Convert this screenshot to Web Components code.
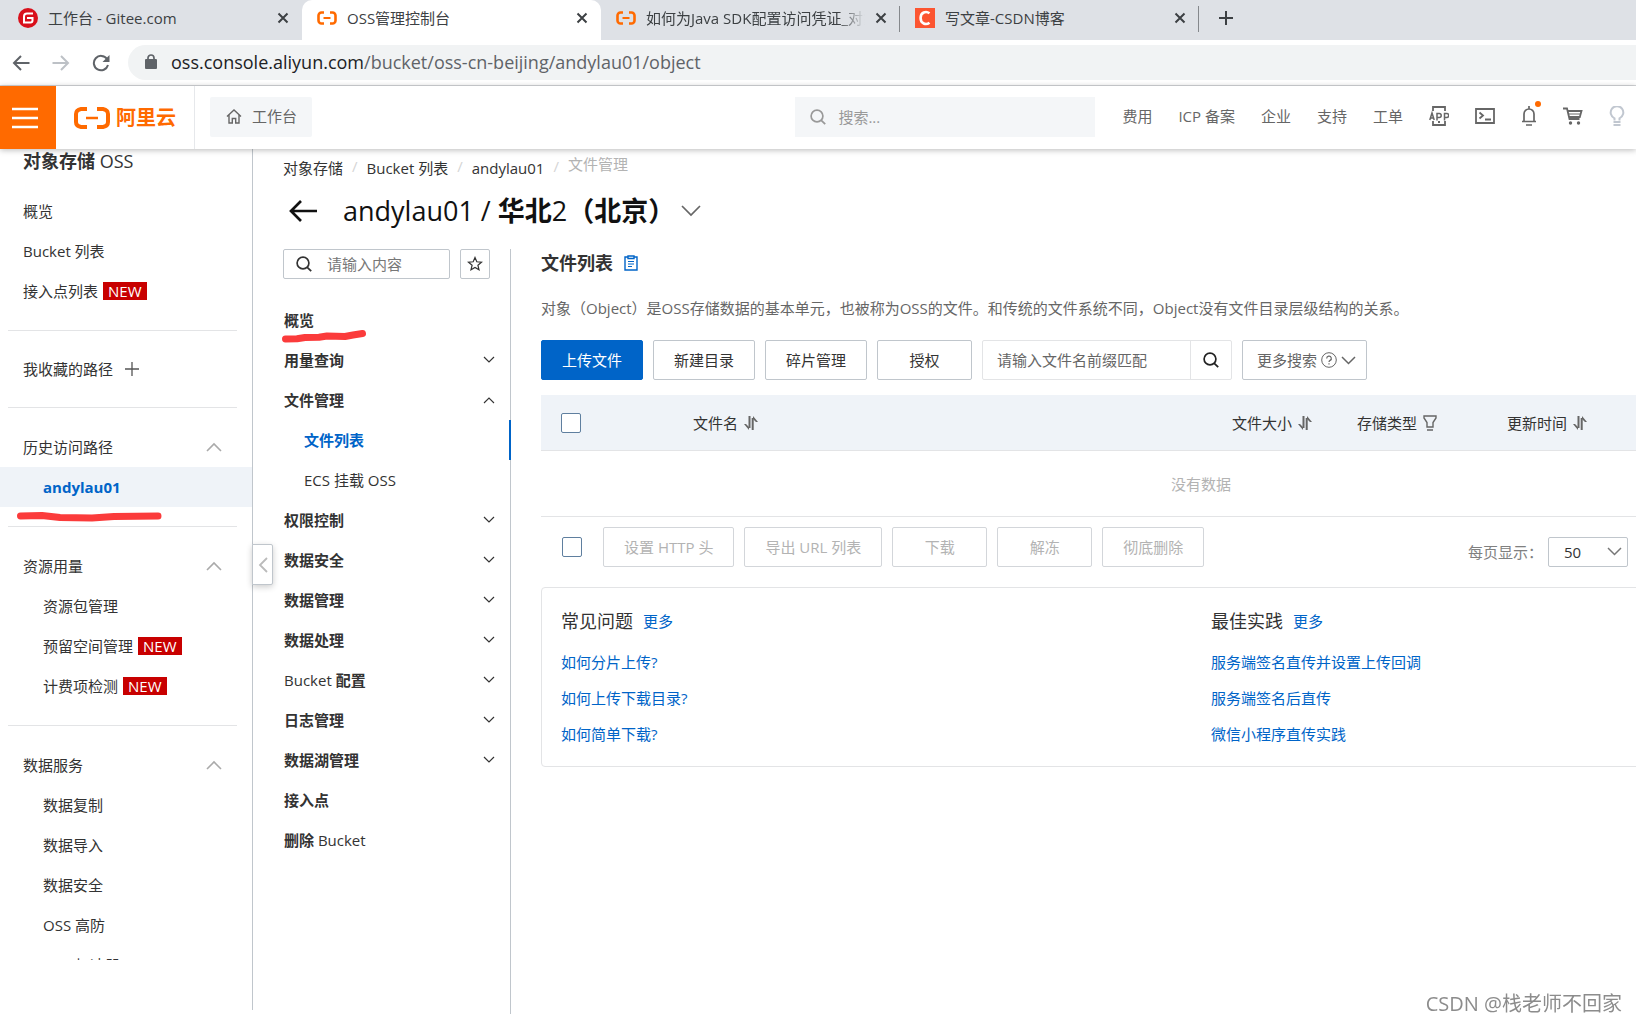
<!DOCTYPE html>
<html lang="zh-CN">
<head>
<meta charset="utf-8">
<title>OSS管理控制台</title>
<style>
html{height:100%}
body{margin:0;height:100%;overflow:hidden;background:#fff;color:#333;
font:15px/20px "Open Sans","Noto Sans CJK SC",sans-serif;
--blue:#0064c8;--orange:#ff6a00;--line:#e3e4e6;--edge:#c0c6cc;--muted:#666;--faint:#b3b3b3;--fill:#eff3f8}
</style>
</head>
<body>
<oss-window></oss-window>
<script>
function define(name, css, html, setup){
  const tpl=document.createElement('template');
  tpl.innerHTML='<style>:host,*{box-sizing:border-box}a{color:inherit;text-decoration:none}button,input,select{font:inherit;color:inherit;margin:0}'+css+'</style>'+html;
  customElements.define(name,class extends HTMLElement{
    connectedCallback(){
      if(this.shadowRoot)return;
      const root=this.attachShadow({mode:'open'});
      root.append(tpl.content.cloneNode(true));
      if(setup)setup(this,root);
    }
  });
}

const S='fill="none" stroke="currentColor" ';
const icons={
 close:[12,12,'<path '+S+'stroke-width="2" d="M1.5 1.5l9 9M10.5 1.5l-9 9"/>'],
 plus:[16,16,'<path '+S+'stroke-width="2" d="M8 1v14M1 8h14"/>'],
 add:[16,16,'<path '+S+'stroke-width="1.3" d="M8 1v14M1 8h14"/>'],
 gitee:[20,20,'<circle cx="10" cy="10" r="10" fill="#d9101b"/><path fill="none" stroke="#fff" stroke-width="2" d="M15 5.5H9a3 3 0 0 0-3 3V14.500h6.500a2 2 0 0 0 2-2V10H9"/>'],
 aliyun:[20,14,'<path fill="none" stroke="#ff6a00" stroke-width="2.600" d="M7 1.500H4.500A3 3 0 0 0 1.500 4.500v5a3 3 0 0 0 3 3H7M13 1.500h2.500a3 3 0 0 1 3 3v5a3 3 0 0 1-3 3H13"/><path stroke="#ff6a00" stroke-width="2" d="M6.500 7h7"/>'],
 brand:[36,22,'<path fill="none" stroke="#ff6a00" stroke-width="4" d="M13 2H7Q2 3 2 7v8q0 4 5 5h6M23 2h6q5 1 5 5v8q0 4-5 5h-6"/><path stroke="#ff6a00" stroke-width="2.500" d="M12 11h12"/>'],
 csdn:[20,20,'<path fill="#fc5531" d="M0 0h20v20H0z"/><path fill="none" stroke="#fff" stroke-width="2.600" d="M14.500 5.300C11 2.700 5.600 4.300 5.600 10s5.400 7.300 8.900 4.700"/>'],
 back:[18,16,'<path '+S+'stroke-width="2" d="M17.500 8H2M9 1L2 8l7 7"/>'],
 forward:[18,16,'<path '+S+'stroke-width="2" d="M.5 8H16M9 1l7 7-7 7"/>'],
 reload:[18,18,'<path '+S+'stroke-width="2" d="M15 5A7.200 7.200 0 1 0 16 11"/><path fill="currentColor" d="M17.500 1v7h-7z"/>'],
 lock:[12,15,'<rect y="5" width="12" height="10" rx="1" fill="currentColor"/><path '+S+'stroke-width="1.700" d="M3 6V4a3 3 0 0 1 6 0v2"/>'],
 menu:[26,22,'<path '+S+'stroke-width="2.400" d="M0 2h26M0 11h26M0 20h26"/>'],
 home:[16,15,'<path '+S+'stroke-width="1.400" d="M1 7.500L8 1l7 6.500M3 6v8h3.300V9.500h3.400V14H13V6"/>'],
 search:[16,16,'<circle cx="7" cy="7" r="5.900" '+S+'stroke-width="1.700"/><path '+S+'stroke-width="1.800" d="M11 11.200l4.200 4"/>'],
 app:[20,20,'<path '+S+'stroke-width="1.800" d="M4 5V1h12v4M4 15v4h12v-4M9 16h2"/><path '+S+'stroke-width="1.500" d="M.8 14L3 7l2.200 7M1.500 12h3M8 14.500V7.500h2.200a1.700 1.700 0 0 1 0 4H8M15.500 14.500V7.500h2.200a1.700 1.700 0 0 1 0 4h-2.200"/>'],
 terminal:[20,16,'<path '+S+'stroke-width="1.800" d="M1 1h18v14H1zM4.500 4.500L8 7.500l-3.500 3M10 11.500h6"/>'],
 bell:[16,20,'<path '+S+'stroke-width="1.700" d="M8 0v3M1 15.500h14M3 15V8a5 5 0 0 1 10 0v7M5 19h6"/>'],
 cart:[20,18,'<path '+S+'stroke-width="1.800" d="M0 1.500h4L6.500 12h10M4.500 4H18.500l-1.700 6H6"/><path '+S+'d="M6 7h11"/><circle cx="7.500" cy="16" r="1.700" fill="currentColor"/><circle cx="15.500" cy="16" r="1.700" fill="currentColor"/>'],
 bulb:[16,20,'<path '+S+'stroke-width="2" d="M5.500 14.500v-2.200a6.300 6.300 0 1 1 5 0v2.200M4.500 16h7M4.500 19h7"/>'],
 up:[16,10,'<path '+S+'stroke-width="1.600" d="M1 9l7-7 7 7"/>'],
 down:[12,8,'<path '+S+'stroke-width="1.200" d="M1 1l5 5 5-5"/>'],
 upSmall:[12,8,'<path '+S+'stroke-width="1.100" d="M1 7l5-5 5 5"/>'],
 downBig:[20,12,'<path '+S+'stroke-width="1.700" d="M1 1l9 9 9-9"/>'],
 downMid:[15,9,'<path '+S+'stroke-width="1.500" d="M1 1l6.500 6.500L14 1"/>'],
 left:[10,16,'<path '+S+'stroke-width="1.800" d="M9 1L2 8l7 7"/>'],
 arrow:[28,22,'<path '+S+'stroke-width="2.700" d="M28 11H2M12 1L2 11l10 10"/>'],
 star:[16,16,'<path '+S+'stroke-width="1.200" d="M8 1.500l1.800 4.300 4.700.4-3.600 3 1.100 4.600L8 11.400l-4 2.400 1.100-4.600-3.600-3 4.700-.4z"/>'],
 note:[14,16,'<path '+S+'stroke-width="1.400" d="M4 2H1v13h12V2h-3M4 1h6v2.500H4z"/><path '+S+'d="M4 6.500h6M4 9h6M4 11.500h4"/>'],
 help:[16,16,'<circle cx="8" cy="8" r="7.300" '+S+'/><path '+S+'stroke-width="1.200" d="M5.700 6.400a2.300 2.300 0 1 1 3.400 2C8.200 8.900 8 9.200 8 10M8 11.200v1.400"/>'],
 sort:[14,14,'<path '+S+'stroke-width="2" d="M5.500 0v12M8.700 14V2"/><path fill="currentColor" d="M0 8h2l3 3v3zM14 6h-2L9 3V0z"/>'],
 filter:[14,16,'<path '+S+'stroke-width="1.400" d="M1 1h12v2L10 7.500V12H4V7.500L1 3zM4 15h6"/>']
};
define('ui-icon',':host{display:inline-flex;flex:none}svg{display:block}','',(el,root)=>{
  const [w,h,p]=icons[el.getAttribute('name')];
  root.innerHTML+='<svg width="'+w+'" height="'+h+'" viewBox="0 0 '+w+' '+h+'" aria-hidden="true">'+p+'</svg>';
});

/* ---------- browser chrome ---------- */
define('browser-tab',`:host{display:flex;flex:0 1 299px;min-width:0;align-items:center;height:40px;padding:0 13px 4px 15px;color:#3c4043;position:relative}
:host([first]){flex-basis:302px;padding-left:18px}
:host([active]){background:#fff;border-radius:10px 10px 0 0}
:host([line])::after{content:"";position:absolute;right:0;top:6px;width:1px;height:26px;background:#85888c}
.t{flex:1;min-width:0;overflow:hidden;white-space:nowrap;margin:0 10px;line-height:24px}
:host([cut]) .t{-webkit-mask-image:linear-gradient(90deg,#000 88%,transparent)}
button{border:0;background:none;padding:0;display:flex}`,
`<slot name="icon"></slot><span class="t"><slot></slot></span><button aria-label="关闭标签页"><ui-icon name="close"></ui-icon></button>`);

define('browser-bar',`:host{display:block}
.tabs{display:flex;height:40px;background:#dee1e6}
.new{border:0;background:none;padding:0 19px 4px;display:flex;align-items:center;color:#3c4043}
.tools{display:flex;align-items:center;height:46px;border-bottom:1px solid #d5d7da;padding-left:12px;color:#5f6368}
.tools button{border:0;background:none;padding:0;display:flex;margin-right:22px}
.tools .f{color:#bdc1c6}
.tools .r{margin-right:18px}
.url{flex:1;height:35px;border-radius:18px 0 0 18px;background:#f1f3f4;display:flex;align-items:center;padding:0 0 2px 17px;gap:14px;font-size:18px;line-height:24px}
b{font-weight:400;color:#202124}`,
`<div class="tabs">
<browser-tab first><ui-icon slot="icon" name="gitee"></ui-icon>工作台 - Gitee.com</browser-tab>
<browser-tab active><ui-icon slot="icon" name="aliyun"></ui-icon>OSS管理控制台</browser-tab>
<browser-tab cut line><ui-icon slot="icon" name="aliyun"></ui-icon>如何为Java SDK配置访问凭证_对象存储</browser-tab>
<browser-tab line><ui-icon slot="icon" name="csdn"></ui-icon>写文章-CSDN博客</browser-tab>
<button class="new" aria-label="新标签页"><ui-icon name="plus"></ui-icon></button></div>
<div class="tools"><button aria-label="后退"><ui-icon name="back"></ui-icon></button><button class="f" aria-label="前进"><ui-icon name="forward"></ui-icon></button><button class="r" aria-label="刷新"><ui-icon name="reload"></ui-icon></button>
<div class="url"><ui-icon name="lock"></ui-icon><span><b>oss.console.aliyun.com</b>/bucket/oss-cn-beijing/andylau01/object</span></div></div>`);

/* ---------- console header ---------- */
define('console-header',`:host{display:flex;height:63px;align-items:flex-start;background:#fff;box-shadow:0 1px 6px rgba(0,0,0,.28);position:relative;z-index:2;color:#666}
.m{width:56px;height:63px;border:0;background:var(--orange);color:#fff;padding:0 0 0 12px;display:flex;align-items:center}
.brand{display:flex;align-items:center;gap:6px;height:63px;padding:0 18px;border-right:1px solid #e6e8eb;color:var(--orange);font-size:20px;font-weight:700;white-space:nowrap}
.work,.s,nav{height:40px;margin-top:11px;display:flex;align-items:center}
.work{gap:10px;margin-left:15px;padding:0 15px 2px 16px;background:#f4f6f8;border-radius:2px;white-space:nowrap}
.s{gap:12px;width:300px;margin-left:auto;padding:0 15px;background:#f4f6f8;color:#999}
.s input{border:0;background:none;outline:0;padding:0;flex:1;min-width:0}
.s input::placeholder{color:#999}
nav{gap:26px;margin-right:11px;margin-left:27px;padding-bottom:2px;white-space:nowrap}
nav a{display:flex;position:relative}
.dot::after{content:"";position:absolute;right:-4px;top:-5px;width:6px;height:6px;border-radius:50%;background:var(--orange)}
.off{color:#c1c7d0}`,
`<button class="m" aria-label="菜单"><ui-icon name="menu"></ui-icon></button>
<a class="brand" href="#"><ui-icon name="brand"></ui-icon>阿里云</a>
<a class="work" href="#"><ui-icon name="home"></ui-icon>工作台</a>
<label class="s"><ui-icon name="search"></ui-icon><input placeholder="搜索..." aria-label="搜索"></label>
<nav><a href="#">费用</a><a href="#">ICP 备案</a><a href="#">企业</a><a href="#">支持</a><a href="#">工单</a>
<a href="#" aria-label="APP"><ui-icon name="app"></ui-icon></a><a href="#" aria-label="终端"><ui-icon name="terminal"></ui-icon></a><a class="dot" href="#" aria-label="消息"><ui-icon name="bell"></ui-icon></a><a href="#" aria-label="购物车"><ui-icon name="cart"></ui-icon></a><a class="off" href="#" aria-label="提示"><ui-icon name="bulb"></ui-icon></a></nav>`);

/* ---------- product sidebar ---------- */
define('side-item',`:host{display:flex;align-items:center;height:40px;padding:0 30px 0 23px;white-space:nowrap}
:host([sub]){padding-left:43px}
:host([current]){background:var(--fill);color:var(--blue);font-weight:700}
:host([fav]){height:38px}
ui-icon{margin-left:auto;color:#aaa}
.n{margin-left:5px;padding:0 5px;height:18px;line-height:18px;background:#c80000;color:#fff}
.add{margin-left:11px;color:#555}`,`<a href="#"><slot></slot></a>`,(el,root)=>{
  if(el.hasAttribute('new'))root.innerHTML+='<span class="n">NEW</span>';
  if(el.hasAttribute('open'))root.innerHTML+='<ui-icon name="up"></ui-icon>';
  if(el.hasAttribute('fav'))root.innerHTML+='<ui-icon class="add" name="add"></ui-icon>';
});
define('side-group',`:host{display:block}:host(:not(:last-child))::after{content:"";display:block;height:1px;background:var(--line);margin:19px 15px 19px 8px}`,`<slot></slot>`);
define('product-nav',`:host{display:flex;flex-direction:column;flex:0 0 253px;border-right:1px solid var(--edge);margin-bottom:13px;position:relative;min-height:0}
.in{flex:1;min-height:0;overflow:hidden;margin-bottom:50px}
h2{margin:0 0 18px;padding-left:23px;font-size:18px;line-height:24px;font-weight:700}h2 span{font-weight:500}
button{position:absolute;left:252px;top:395px;width:21px;height:41px;padding:0;border:1px solid var(--edge);border-radius:0 2px 2px 0;background:#fff;color:#bbb;display:flex;align-items:center;justify-content:center;box-shadow:0 2px 6px rgba(0,0,0,.2);z-index:1}
svg{position:absolute;left:14px;top:360px}`,
`<div class="in"><h2>对象存储 <span>OSS</span></h2>
<side-group><side-item>概览</side-item><side-item>Bucket 列表</side-item><side-item new>接入点列表</side-item></side-group>
<side-group><side-item fav>我收藏的路径</side-item></side-group>
<side-group><side-item open>历史访问路径</side-item><side-item sub current>andylau01</side-item></side-group>
<side-group><side-item open>资源用量</side-item><side-item sub>资源包管理</side-item><side-item sub new>预留空间管理</side-item><side-item sub new>计费项检测</side-item></side-group>
<side-group><side-item open>数据服务</side-item><side-item sub>数据复制</side-item><side-item sub>数据导入</side-item><side-item sub>数据安全</side-item><side-item sub>OSS 高防</side-item><side-item sub>OSS 加速器</side-item></side-group></div>
<button aria-label="收起导航"><ui-icon name="left"></ui-icon></button>
<svg width="152" height="14" aria-hidden="true"><path d="M6.500 7L28 6.500 46 8.500 78 9 100 7.500 144 7" fill="none" stroke="#fb3b3b" stroke-width="7" stroke-linecap="round" stroke-linejoin="round"/></svg>`);

/* ---------- bucket menu ---------- */
define('menu-item',`:host{display:flex;align-items:center;height:40px;padding:0 15px 0 1px;font-weight:700;white-space:nowrap}
:host([sub]){padding-left:21px;font-weight:400}
:host([current]){color:var(--blue);font-weight:700;border-right:2px solid var(--blue);margin-right:-1px}
::slotted(span){font-weight:500}
ui-icon{margin-left:auto}`,`<a href="#"><slot></slot></a>`,(el,root)=>{
  const a=el.getAttribute('arrow');if(a)root.innerHTML+='<ui-icon name="'+a+'"></ui-icon>';
});
define('bucket-menu',`:host{display:block;flex:0 0 228px;min-width:0;border-right:1px solid var(--edge);position:relative}
.q{display:flex;gap:10px;padding-right:20px;margin-bottom:21px}
label{display:flex;align-items:center;flex:1;min-width:0;gap:15px;height:30px;border:1px solid var(--edge);border-radius:2px;padding-left:12px}
input{border:0;outline:0;padding:0;flex:1;min-width:0;width:0;background:none}
input::placeholder{color:#777}
.q button{flex:none;width:30px;height:30px;padding:0;border:1px solid var(--edge);border-radius:2px;background:#fff;display:flex;align-items:center;justify-content:center}
svg{position:absolute;left:-4px;top:80px}`,
`<div class="q"><label><ui-icon name="search"></ui-icon><input placeholder="请输入内容" aria-label="搜索菜单"></label><button aria-label="收藏"><ui-icon name="star"></ui-icon></button></div>
<menu-item>概览</menu-item><menu-item arrow="down">用量查询</menu-item><menu-item arrow="upSmall">文件管理</menu-item><menu-item sub current>文件列表</menu-item><menu-item sub>ECS 挂载 OSS</menu-item><menu-item arrow="down">权限控制</menu-item><menu-item arrow="down">数据安全</menu-item><menu-item arrow="down">数据管理</menu-item><menu-item arrow="down">数据处理</menu-item><menu-item arrow="down"><span>Bucket</span> 配置</menu-item><menu-item arrow="down">日志管理</menu-item><menu-item arrow="down">数据湖管理</menu-item><menu-item>接入点</menu-item><menu-item>删除 <span>Bucket</span></menu-item>
<svg width="92" height="16" aria-hidden="true"><path d="M6.500 10L18 9.800 26 8.500 40 8.300 48 7 66 7.500 74 6 83.500 4.500" fill="none" stroke="#fb3b3b" stroke-width="7" stroke-linecap="round" stroke-linejoin="round"/></svg>`);

/* ---------- file list ---------- */
define('ui-button',`:host{display:block;flex:none}
button{display:block;height:40px;min-width:95px;padding:0 20px;border:1px solid var(--edge);border-radius:2px;background:#fff;white-space:nowrap}
:host([primary]) button{background:var(--blue);border-color:var(--blue);color:#fff}
button:disabled{color:var(--faint);border-color:#d3d6da}`,`<button><slot></slot></button>`,(el,root)=>{
  root.querySelector('button').disabled=el.hasAttribute('disabled');
});
const check='input[type=checkbox]{appearance:none;display:block;width:20px;height:20px;border:1px solid #5f7f9f;border-radius:2px;background:#fff}';
define('file-toolbar',`:host{display:flex;gap:10px}
.s{display:flex;flex:none;width:250px;height:40px;border:1px solid var(--line);border-radius:2px}
.s input{flex:1;min-width:0;border:0;outline:0;padding:0 0 0 14px;background:none}
.s input::placeholder{color:#666}
.s button{width:41px;border:0;border-left:1px solid var(--line);background:none;padding:0;display:flex;align-items:center;justify-content:center;color:#222}
.more{display:flex;align-items:center;gap:4px;height:40px;padding:0 10px 0 14px;border:1px solid var(--edge);border-radius:2px;background:#fff;color:#666;white-space:nowrap}`,
`<ui-button primary>上传文件</ui-button><ui-button>新建目录</ui-button><ui-button>碎片管理</ui-button><ui-button>授权</ui-button>
<div class="s"><input placeholder="请输入文件名前缀匹配" aria-label="文件名前缀"><button aria-label="搜索"><ui-icon name="search"></ui-icon></button></div>
<button class="more">更多搜索<ui-icon name="help"></ui-icon><ui-icon name="downMid"></ui-icon></button>`);
define('file-table',`:host{display:block}${check}
table{width:100%;table-layout:fixed;border-collapse:separate;border-spacing:0}
th{height:56px;padding:0 20px;background:var(--fill);border-bottom:1px solid var(--line);text-align:left;font-weight:400;white-space:nowrap}
th span{display:flex;align-items:center;gap:6px}th ui-icon{color:#666}
td{height:66px;padding:0;border-bottom:1px solid var(--line);text-align:center;color:var(--faint)}
.a{width:132px}.c{width:125px}.d{width:150px}.e{width:374px}`,
`<table><thead><tr><th class="a"><input type="checkbox" aria-label="全选"></th><th><span>文件名 <ui-icon name="sort"></ui-icon></span></th><th class="c"><span>文件大小 <ui-icon name="sort"></ui-icon></span></th><th class="d"><span>存储类型 <ui-icon name="filter"></ui-icon></span></th><th class="e"><span>更新时间 <ui-icon name="sort"></ui-icon></span></th></tr></thead>
<tbody><tr><td colspan="5">没有数据</td></tr></tbody></table>`);
define('file-footer',`:host{display:flex;align-items:center;gap:10px;padding:10px 8px 20px 21px}${check}
input[type=checkbox]{margin-right:11px}
.p{display:flex;align-items:center;gap:5px;margin:10px 0 0 auto;color:#808080;white-space:nowrap}
.sel{position:relative;display:flex;color:#333}
select{appearance:none;width:80px;height:30px;border:1px solid var(--edge);border-radius:2px;background:#fff;padding:0 15px}
.sel ui-icon{position:absolute;right:6px;top:10px;color:#777;pointer-events:none}`,
`<input type="checkbox" aria-label="选择全部"><ui-button disabled>设置 HTTP 头</ui-button><ui-button disabled>导出 URL 列表</ui-button><ui-button disabled>下载</ui-button><ui-button disabled>解冻</ui-button><ui-button disabled>彻底删除</ui-button>
<div class="p"><label for="size">每页显示：</label><div class="sel"><select id="size"><option>50</option></select><ui-icon name="downMid"></ui-icon></div></div>`);
define('help-list',`:host{display:flex;flex-direction:column;color:var(--blue)}
header{display:flex;align-items:center;gap:10px;margin-bottom:11px}
h3{margin:0;font-size:18px;line-height:24px;font-weight:400;color:#333}
::slotted(a){display:block;line-height:36px;color:inherit;text-decoration:none}`,
`<header><h3></h3><a href="#">更多</a></header><slot></slot>`,(el,root)=>{root.querySelector('h3').textContent=el.getAttribute('heading')});
define('file-panel',`:host{display:block;flex:1;min-width:0;overflow:hidden;padding-left:30px}
h2{display:flex;align-items:center;gap:11px;margin:0 0 20px;font-size:18px;line-height:28px;font-weight:700}
h2 ui-icon{color:var(--blue)}
p{margin:0 0 21px;line-height:22px;color:#666;white-space:nowrap}
.wide{width:calc(100% + 225px)}
file-toolbar{margin-bottom:15px}
.help{display:grid;grid-template-columns:1fr 1fr;gap:20px;border:1px solid var(--line);border-radius:4px;padding:21px 19px 14px}`,
`<h2>文件列表<ui-icon name="note"></ui-icon></h2>
<p>对象（Object）是OSS存储数据的基本单元，也被称为OSS的文件。和传统的文件系统不同，Object没有文件目录层级结构的关系。</p>
<file-toolbar></file-toolbar>
<file-table class="wide"></file-table>
<file-footer></file-footer>
<div class="help wide">
<help-list heading="常见问题"><a href="#">如何分片上传?</a><a href="#">如何上传下载目录?</a><a href="#">如何简单下载?</a></help-list>
<help-list heading="最佳实践"><a href="#">服务端签名直传并设置上传回调</a><a href="#">服务端签名后直传</a><a href="#">微信小程序直传实践</a></help-list></div>`);

/* ---------- page ---------- */
define('bucket-heading',`:host{display:block}
nav{display:flex;gap:9px;padding-top:9px;line-height:20px;white-space:nowrap}
i{color:#d5d5d5;font-style:normal;line-height:16px}
nav span{color:var(--faint);line-height:12px}
div{display:flex;align-items:center;margin:15px 0 20px;padding-left:6px;height:36px;color:#111}
h1{margin:0 6px 0 26px;font-size:27px;line-height:36px;font-weight:700;white-space:nowrap}h1 span{font-weight:500}
button{border:0;background:none;padding:0;display:flex}.v{color:#666}`,
`<nav><a href="#">对象存储</a><i>/</i><a href="#">Bucket 列表</a><i>/</i><a href="#">andylau01</a><i>/</i><span>文件管理</span></nav>
<div><button aria-label="返回"><ui-icon name="arrow"></ui-icon></button><h1><span>andylau01 / </span>华北<span>2</span>（北京）</h1><button class="v" aria-label="切换 Bucket"><ui-icon name="downBig"></ui-icon></button></div>`);
define('oss-window',`:host{display:flex;flex-direction:column;height:100%}
.body{flex:1;min-height:0;display:flex}
main{flex:1;min-width:0;display:flex;flex-direction:column;padding:0 0 9px 30px}
.cols{flex:1;min-height:0;display:flex}
.mark{position:fixed;right:14px;bottom:5px;font-size:20px;line-height:28px;color:#8c8c8c}`,
`<browser-bar></browser-bar><console-header></console-header>
<div class="body"><product-nav></product-nav><main><bucket-heading></bucket-heading><div class="cols"><bucket-menu></bucket-menu><file-panel></file-panel></div></main></div>
<div class="mark">CSDN @栈老师不回家</div>`);
</script>
</body>
</html>
